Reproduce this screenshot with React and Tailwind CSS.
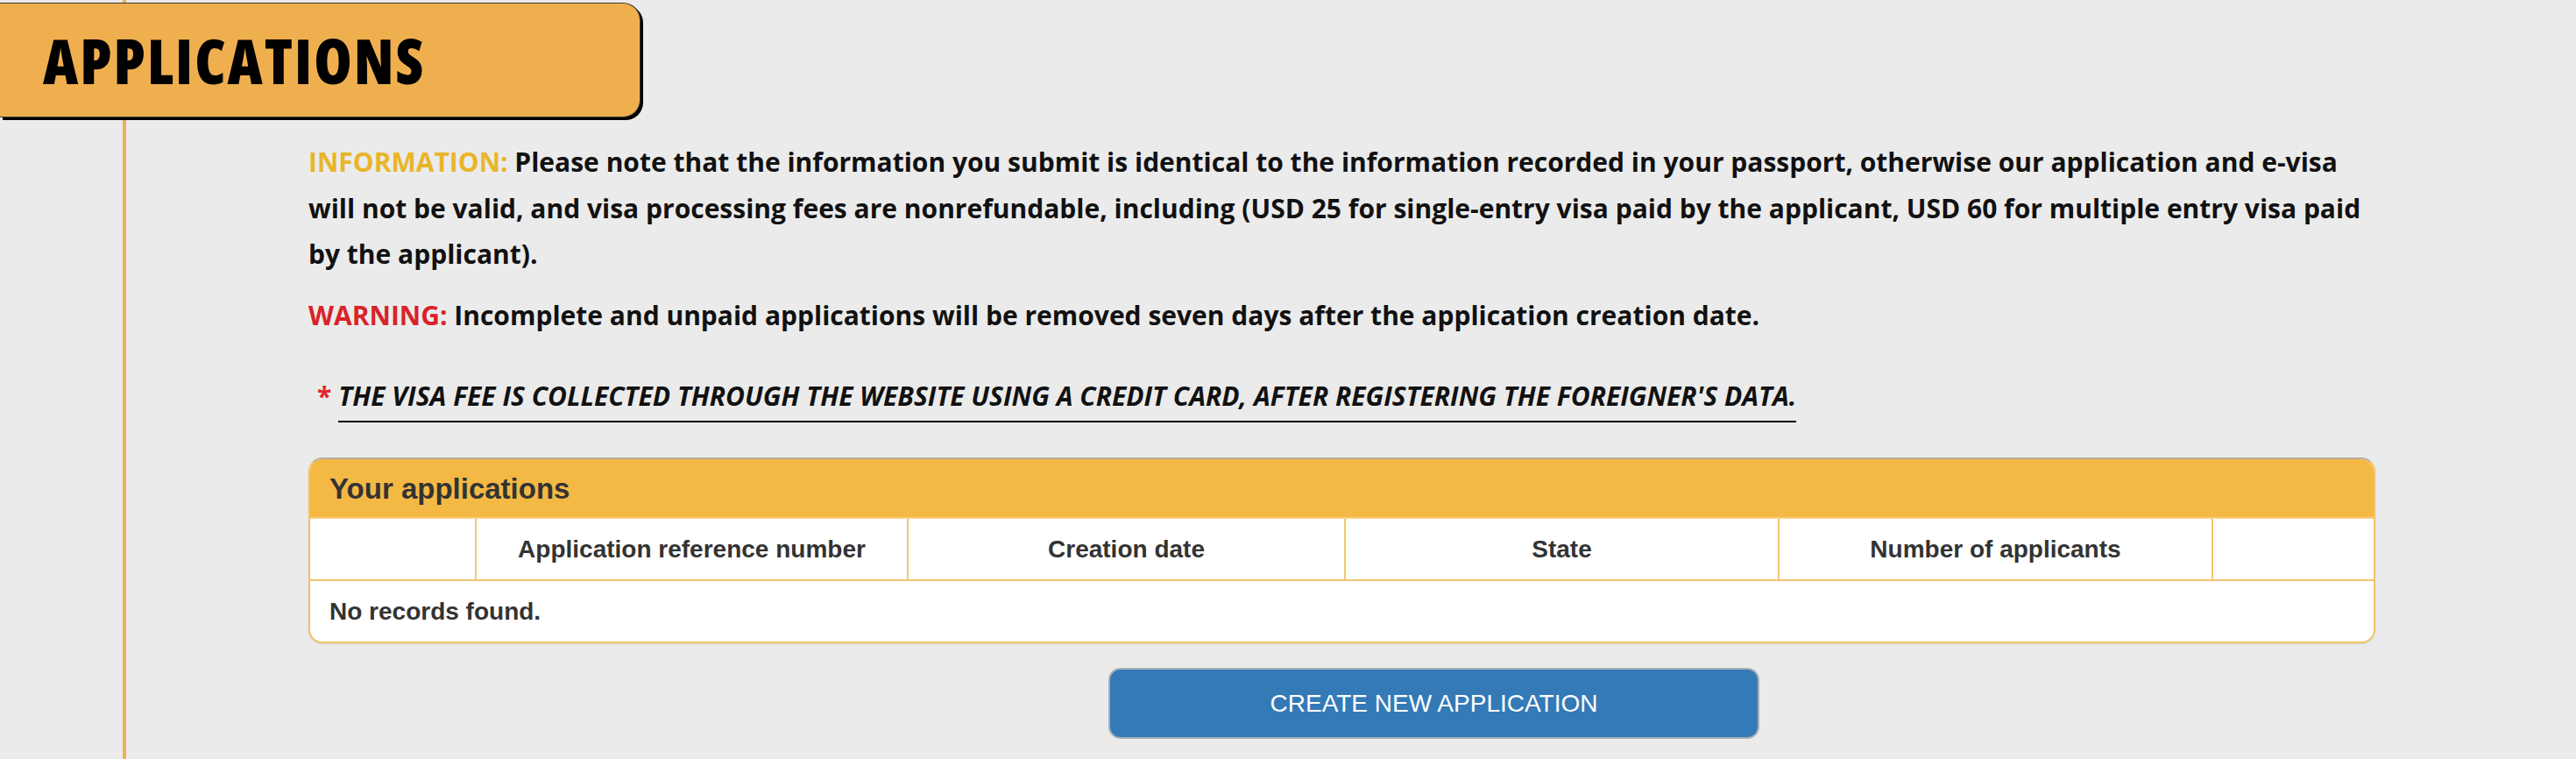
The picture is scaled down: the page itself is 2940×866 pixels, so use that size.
import React from "react";

const cols = [
  { w: "w-[190px]", label: "" },
  { w: "w-[493px]", label: "Application reference number" },
  { w: "w-[499px]", label: "Creation date" },
  { w: "w-[495px]", label: "State" },
  { w: "w-[495px]", label: "Number of applicants" },
  { w: "w-[187px]", label: "" },
];

export default function App() {
  return (
    <div className="min-h-[866px] bg-[#ebebeb] pl-[140px] overflow-hidden">
      <div className="min-h-[866px] border-l-4 border-[#efb05c] pb-[20px]">
        {/* Title tab */}
        <div className="-ml-[144px] pt-[3px]">
          <div className="w-[731px] h-[131px] bg-[#f0af4f] rounded-r-[20px] border border-l-0 border-[#3a3a3a] shadow-[3px_3px_0_#000] flex items-center pl-[49px]">
            <h1 className="font-['Open_Sans',sans-serif] font-extrabold text-[70px] leading-none text-black [font-stretch:75%] tracking-[2px]">
              APPLICATIONS
            </h1>
          </div>
        </div>

        {/* Content */}
        <div className="ml-[208px] w-[2359px] pt-[25px] font-['Open_Sans',sans-serif] font-bold text-[30px] leading-[52.5px] text-[#111]">
          <p className="mb-[17px]">
            <span className="text-[#e9b528]">INFORMATION:</span> Please note that the information you submit is identical to the information recorded in your passport, otherwise our application and e-visa will not be valid, and visa processing fees are nonrefundable, including (USD 25 for single-entry visa paid by the applicant, USD 60 for multiple entry visa paid by the applicant).
          </p>
          <p>
            <span className="text-[#d8232a]">WARNING:</span> Incomplete and unpaid applications will be removed seven days after the application creation date.
          </p>

          <div className="mt-[40px] pl-[10px] flex items-start leading-[52px]">
            <span className="text-[#e4232b] font-bold mr-[8px]">*</span>
            <span className="italic font-bold text-[30px] uppercase border-b-2 border-black pb-[2px]">
              The visa fee is collected through the website using a credit card, after registering the foreigner's data.
            </span>
          </div>

          {/* Applications panel */}
          <div className="mt-[40px] rounded-[16px] border-2 border-[#f3c465] border-t-[#b9ad9a] bg-white overflow-hidden font-['Liberation_Sans',Arial,sans-serif] text-[#333] shadow-[0_1px_2px_rgba(0,0,0,0.1)]">
            <div className="h-[68px] bg-[#f4b944] border-b-2 border-[#f7d083] flex items-center pl-[22px]">
              <span className="font-bold text-[33px] leading-none">Your applications</span>
            </div>
            <div className="flex h-[71px] border-b-2 border-[#f0c470]">
              {cols.map((c, i) => (
                <div
                  key={i}
                  className={`${c.w} shrink-0 flex items-center justify-center font-bold text-[28px] leading-none ${i < cols.length - 1 ? "border-r-2 border-[#f1c871]" : ""}`}
                >
                  {c.label}
                </div>
              ))}
            </div>
            <div className="h-[69px] flex items-center pl-[22px] font-bold text-[28px] leading-none">
              No records found.
            </div>
          </div>

          {/* Button */}
          <div className="mt-[28px] ml-[913px]">
            <button className="w-[743px] h-[81px] bg-[#337ab7] border-2 border-[#a7aeb5] rounded-[14px] text-white font-['Liberation_Sans',Arial,sans-serif] font-normal text-[28px] leading-none">
              CREATE NEW APPLICATION
            </button>
          </div>
        </div>
      </div>
    </div>
  );
}
